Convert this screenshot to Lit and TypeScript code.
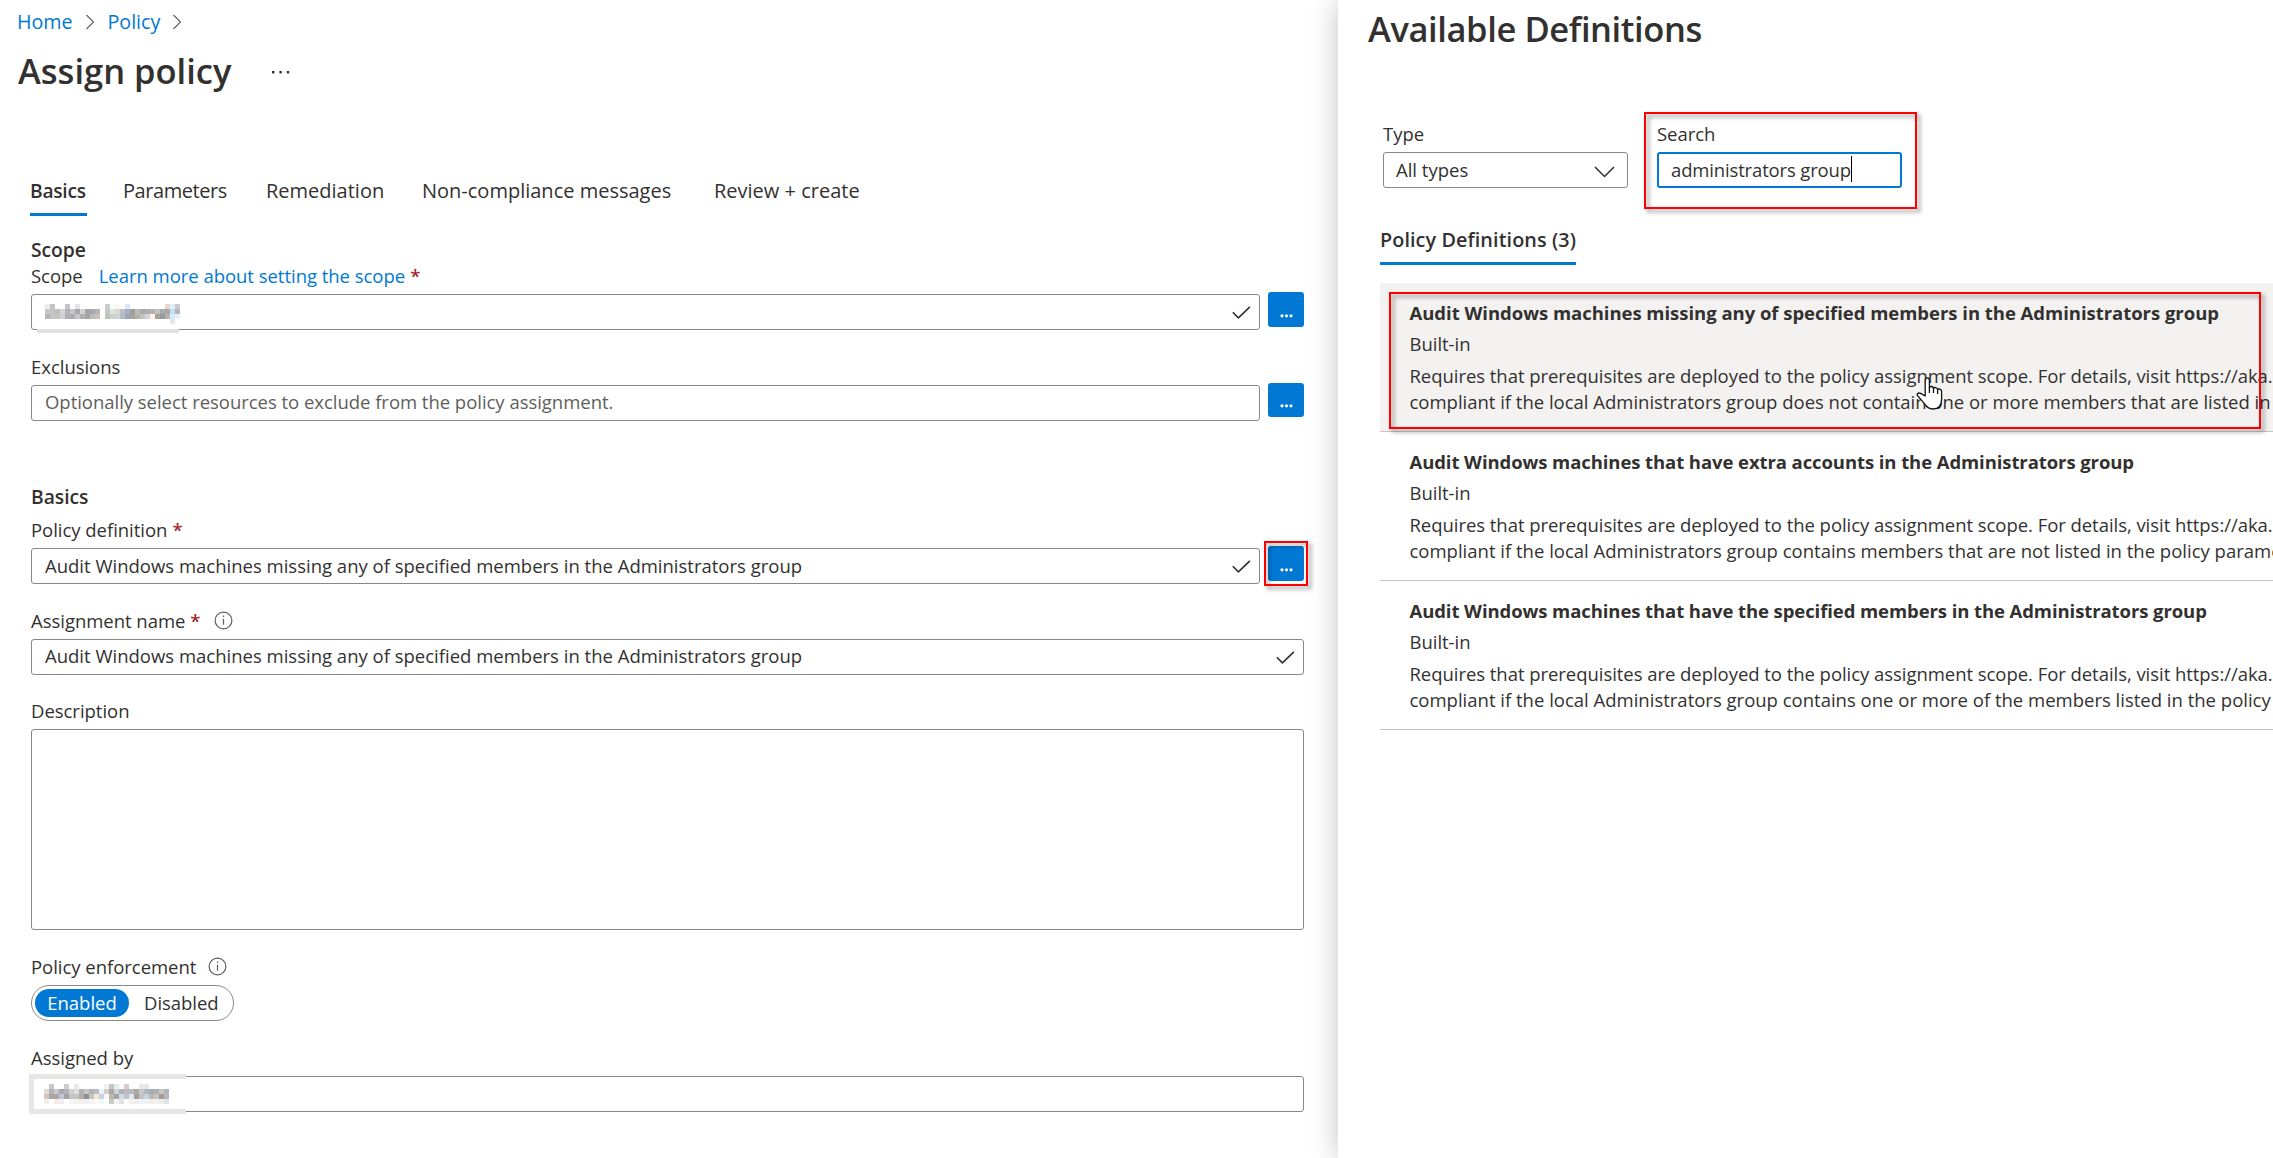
import { LitElement, html, css, svg, nothing } from 'lit';
import { customElement, property } from 'lit/decorators.js';

const SCOPE_MASK = [
  'f3e8e2 c0c5cd - - c4c4c6 - e6e6e6 - - - - - cccccc f8feff fff8ee - dbe6f2 - - - - - - - e8d5cd dcedfb c8c8cc',
  'c9c9c9 c3c3c4 bfbec4 d8d4d0 b4b4b8 c6c6c8 a8a8ac d6d2cc a6a6a8 a9a9ac b5b5b8 - c6c6c4 e2e4e0 dcd8d4 bac0c4 a6b0c4 a09c9c b8bcc0 aca8a4 b0aeae b6b2b2 c6c2ba a6aaae a8a6aa c6ddf2 b2b6ba',
  'b8b6b4 c4c4c4 c8c4bc cfd3d8 b0b0b4 a8acb0 c4c8cc b0b0b0 a2a6a8 b8bcbe cdbcba - bec2ba ccd0cc d4d4d2 b4bac6 9ea6b4 a8a29e b4b0ae c8c2bc d0d4d8 fff4e6 a8a4a0 989a9c bab2ac d4eafa e8f2fc',
  '- - - - - - - - - - - - - - - - - - - - - - - - - e6e6e8 -',
];
const ASSIGNED_MASK = [
  '- cac6c4 - - cccccc - e8e8e6 - - - - - f6f0ea c2c6c4 e4ecf4 - d6ccd2 - - e8e8e6 e6e8e6 - - - -',
  'e2dad4 b4b4b6 c6cace a8a8ac b2b2b8 d0d0cc dce0e4 b2b2b4 c6c8ca b6b2b0 b8bcc4 e8f4fc d4ccc6 a8aaa8 cfd3d8 aab2ba c2b8b8 b6babe a6aaae c6c6c8 b4b8bc a8acb4 b0aeae c4c8c4 b0b4b8',
  'd4c8be a4a8ac b4a49c bcc8d8 a2a2a6 c2c6c2 c8c4c4 b4aca8 8e9092 c2c6c0 fbe6cc c8d2ea fcf8f4 bab6b4 a8a4a4 d0dcea bcc2ca e2e8f0 a89c94 c0c4c2 c6d4e0 bcb8b4 c4c4c2 a49c94 b4b8bc',
  'eeeef0 - f6ece8 eef0f4 - f4f6f6 f4f2f0 f6eee8 f2f0f4 f4f4f4 fdfaf2 f0f8fc - c8cac8 f4f4f2 e2e2e6 - f6f0ee f0f0f2 f0f4f8 f0f2f4 f4ece8 f0f2f4 eef0f0 e0e2e6',
];

const mosaic = (rows: string[], cols: number) => html`
  <svg width=${cols * 5} height=${rows.length * 5} shape-rendering="crispEdges">
    ${rows.map((row, y) => row.split(' ').map((c, x) => c === '-' ? nothing
      : svg`<rect x=${x * 5} y=${y * 5} width="5" height="5" fill=${'#' + c} />`))}
  </svg>`;

const check = html`
  <svg class="check" width="19" height="13" viewBox="0 0 19 13" fill="none" stroke="#323130" stroke-width="1.6">
    <path d="M.8 6.3 6.4 11.8 17.9.8" />
  </svg>`;

const info = html`<svg class="info" width="19" height="19" viewBox="0 0 19 19" fill="none" stroke="#605e5c">
    <circle cx="9.5" cy="9.5" r="8.4" stroke-width="1.2" />
    <path d="M9.5 7.8v6M9.5 4.6v1.5" stroke-width="1.2" />
  </svg>`;

const crumbArrow = html`
  <svg class="crumb" width="10" height="16" viewBox="0 0 10 16" fill="none" stroke="#605e5c" stroke-width="1.1">
    <path d="M1.5 1 8.5 8 1.5 15" />
  </svg>`;

const base = css`
  * { box-sizing: border-box; }
  svg { display: block; flex: none; }
  .label { display: flex; align-items: center; height: 24px; margin-bottom: 7px; white-space: nowrap; }
  .field {
    display: flex; position: relative; flex: 1; height: 36px; padding: 0 8px 0 13px;
    border: 1px solid #8a8886; border-radius: 3px; background: #fff; white-space: nowrap;
  }
  .value { flex: 1; line-height: 33px; letter-spacing: 0; }
`;

@customElement('picker-button')
class PickerButton extends LitElement {
  @property({ type: Boolean }) marked = false;
  @property({ type: Boolean }) short = false;
  static styles = [base, css`
    :host { display: block; position: relative; width: 36px; height: 36px; margin-left: 8px; }
    .btn {
      display: flex; justify-content: center; width: 36px; height: 35px; margin-top: -2px;
      padding-top: 22px; border-radius: 3px; background: #0078d4;
    }
    .btn.short { height: 34px; padding-top: 21px; }
    .mark {
      position: absolute; left: -4px; top: -7px; width: 44px; height: 45px;
      border: 2px solid #f00; filter: drop-shadow(3px 3px 2px rgba(0, 0, 0, .45));
    }
  `];
  render() {
    return html`
      <div class="btn ${this.short ? 'short' : ''}">
        <svg width="13" height="4" fill="#fff">
          <circle cx="2" cy="1.8" r="1.6" /><circle cx="6.5" cy="1.8" r="1.6" /><circle cx="11" cy="1.8" r="1.6" />
        </svg>
      </div>
      ${this.marked ? html`<div class="mark"></div>` : nothing}`;
  }
}

@customElement('assign-form')
class AssignForm extends LitElement {
  static styles = [base, css`
    :host { display: block; width: 1338px; height: 1158px; }
    .crumbs { display: flex; align-items: center; height: 43px; padding-left: 17px; font-size: 19.7px; color: #0078d4; }
    .crumb { margin: 0 13px 0 12px; }
    .head { display: flex; height: 54px; padding-left: 18px; line-height: 56px; font-size: 34.5px; font-weight: 600; letter-spacing: 0; }
    .more { margin: 28px 0 0 41px; }
    .tabs {
      display: grid; grid-template-columns: 93px 143px 156px 292px auto; margin: 72px 0 0 30px;
      font-size: 20px; line-height: 44px; letter-spacing: 0; white-space: nowrap;
    }
    .tab { justify-self: start; height: 47px; }
    .tab.tight { letter-spacing: -.45px; }
    .tab.on { width: 57px; border-bottom: 3px solid #0078d4; font-size: 19.2px; font-weight: 600; letter-spacing: -.25px; }
    .body { width: 1273px; margin: 21px 0 0 31px; }
    .section { height: 26px; line-height: 26px; font-size: 19.3px; font-weight: 600; }
    .basics { margin: 63px 0 7px; }
    .row { display: flex; margin-bottom: 24px; }
    .link { margin-left: 16px; color: #0078d4; }
    .req { width: 14px; margin-left: 5px; color: #a4262c; font-weight: 600; }
    .info { margin-left: 12px; }
    .req + .info { margin-left: 10px; }
    .check { margin-top: 11px; }
    .value.high { line-height: 32px; }
    .hint { color: #605e5c; line-height: 32px; letter-spacing: -.03px; }
    .area { height: 201px; margin: -1px 0 24px; border: 1px solid #8a8886; border-radius: 3px; }
    .desc { position: relative; top: -1px; }
    .masked { padding-top: 9px; }
    .smudge { position: absolute; left: 5px; top: 34px; width: 142px; height: 4px; background: #e1e1e0; }
    .frame { position: absolute; left: -3px; top: -3px; width: 157px; height: 40px; border: 5px solid #e6e6e5; border-right: 0; background: #fff; padding: 5px 0 0 10px; }
    .toggle {
      display: flex; width: 203px; height: 36px; margin-bottom: 24px; padding: 3px; border: 1px solid #8a8886;
      border-radius: 18px; line-height: 27px;
    }
    .on-pill { width: 94px; border-radius: 14px; background: #0078d4; color: #fff; text-align: center; }
    .off { margin-left: 15px; }
  `];
  render() {
    const policy = 'Audit Windows machines missing any of specified members in the Administrators group';
    return html`
      <div class="crumbs"><span>Home</span>${crumbArrow}<span>Policy</span>${crumbArrow}</div>
      <div class="head"><span>Assign policy</span>
        <svg class="more" width="20" height="4" fill="#323130">
          <rect x="0" y="0" width="2.4" height="2.4" /><rect x="7.4" y="0" width="2.4" height="2.4" /><rect x="14.8" y="0" width="2.4" height="2.4" />
        </svg>
      </div>
      <div class="tabs">
        <span class="tab on">Basics</span><span class="tab tight">Parameters</span><span class="tab">Remediation</span>
        <span class="tab">Non-compliance messages</span><span class="tab">Review + create</span>
      </div>
      <div class="body">
        <div class="section">Scope</div>
        <div class="label">Scope<span class="link">Learn more about setting the scope</span><span class="req">*</span></div>
        <div class="row">
          <div class="field"><div class="value masked">${mosaic(SCOPE_MASK, 27)}</div>${check}<div class="smudge"></div></div>
          <picker-button></picker-button>
        </div>
        <div class="label">Exclusions</div>
        <div class="row">
          <div class="field"><div class="value hint">Optionally select resources to exclude from the policy assignment.</div></div>
          <picker-button short></picker-button>
        </div>
        <div class="section basics">Basics</div>
        <div class="label">Policy definition<span class="req">*</span></div>
        <div class="row">
          <div class="field"><div class="value">${policy}</div>${check}</div>
          <picker-button marked></picker-button>
        </div>
        <div class="label">Assignment name<span class="req">*</span>${info}</div>
        <div class="row"><div class="field"><div class="value high">${policy}</div>${check}</div></div>
        <div class="label desc">Description</div>
        <div class="area"></div>
        <div class="label">Policy enforcement${info}</div>
        <div class="toggle"><span class="on-pill">Enabled</span><span class="off">Disabled</span></div>
        <div class="label">Assigned by</div>
        <div class="row"><div class="field"><div class="frame">${mosaic(ASSIGNED_MASK, 25)}</div></div></div>
      </div>`;
  }
}

const DEFINITIONS = [
  { title: 'Audit Windows machines missing any of specified members in the Administrators group',
    text: 'compliant if the local Administrators group does not contain one or more members that are listed in' },
  { title: 'Audit Windows machines that have extra accounts in the Administrators group',
    text: 'compliant if the local Administrators group contains members that are not listed in the policy parame' },
  { title: 'Audit Windows machines that have the specified members in the Administrators group',
    text: 'compliant if the local Administrators group contains one or more of the members listed in the policy' },
];

@customElement('definitions-panel')
class DefinitionsPanel extends LitElement {
  static styles = [base, css`
    :host {
      display: block; position: relative; width: 935px; height: 1158px; background: #fff;
      box-shadow: 0 0 27px rgba(0, 0, 0, .24);
    }
    .title { height: 58px; padding-left: 30px; line-height: 58px; font-size: 34.5px; font-weight: 600; letter-spacing: -.4px; }
    .filters { display: flex; gap: 29px; margin: 63px 0 0 45px; }
    .filter { position: relative; width: 245px; }
    .filter .field { flex: none; width: 245px; padding-left: 12px; }
    .drop { margin: 13px 4px 0 0; }
    .filter .focus { border: 2px solid #0078d4; }
    .focus span { line-height: 31px; letter-spacing: -.15px; }
    .caret { width: 1px; height: 26px; margin-top: 2px; background: #000; }
    .mark { position: absolute; border: 2px solid #f00; filter: drop-shadow(3px 3px 2px rgba(0, 0, 0, .45)); }
    .mark.search { left: -13px; top: -9px; width: 273px; height: 97px; }
    .mark.item { left: 9px; top: 9px; width: 872px; height: 137px; }
    .tab {
      width: 196px; height: 47px; margin: 30px 0 18px 42px; border-bottom: 3px solid #0078d4;
      line-height: 44px; font-size: 19.8px; font-weight: 600; letter-spacing: .09px; white-space: nowrap;
    }
    .def { position: relative; height: 149px; margin-left: 42px; padding: 17px 0 0 29.5px; border-bottom: 1px solid #c8c6c4; white-space: nowrap; }
    .def.hover { background: #f3f2f1; }
    .name { height: 26px; line-height: 26px; font-weight: 700; letter-spacing: -.085px; }
    .hover .name { letter-spacing: -.03px; }
    .kind { height: 26px; margin-top: 5px; line-height: 26px; }
    .text { height: 26px; line-height: 26px; letter-spacing: 0; }
    .hover .text { letter-spacing: -.012px; }
    .def .text.first { margin-top: 6px; letter-spacing: -.045px; }
    .hand { position: absolute; left: 536px; top: 94px; }
  `];
  render() {
    return html`
      <div class="title">Available Definitions</div>
      <div class="filters">
        <div class="filter">
          <div class="label">Type</div>
          <div class="field"><div class="value">All types</div>
            <svg class="drop" width="21" height="12" viewBox="0 0 21 12" fill="none" stroke="#323130" stroke-width="1.5"><path d="M1 1 10.5 10.5 20 1" /></svg>
          </div>
        </div>
        <div class="filter">
          <div class="label">Search</div>
          <div class="field focus"><span>administrators group</span><div class="caret"></div></div>
          <div class="mark search"></div>
        </div>
      </div>
      <div class="tab">Policy Definitions (3)</div>
      ${DEFINITIONS.map((d, i) => html`
        <div class="def ${i === 0 ? 'hover' : ''}">
          <div class="name">${d.title}</div>
          <div class="kind">Built-in</div>
          <div class="text first">Requires that prerequisites are deployed to the policy assignment scope. For details, visit https://aka.</div>
          <div class="text">${d.text}</div>
          ${i === 0 ? html`
            <div class="mark item"></div>
            <svg class="hand" width="27" height="34" viewBox="0 0 27 34" fill="#fff" stroke="#111" stroke-width="1.3" stroke-linejoin="round">
              <path d="M9.2 19V3.2C9.2.2 13.4.2 13.4 3.2V11C14 8.8 17.4 9 17.5 11.6 18.2 9.8 21.5 10.2 21.6 12.8 22.4 11.4 25.6 11.8 25.6 14.6V22C25.6 28 22.6 32 17 32 12.4 32 10.4 30 8.4 26.6L1.6 18.6C.4 16.6 2.6 15.4 4.6 16.4Z" />
              <path d="M13.4 10.5V16M17.5 11.5V16M21.6 12.8V17" fill="none" />
            </svg>` : nothing}
        </div>`)}`;
  }
}

@customElement('app-root')
class AppRoot extends LitElement {
  static styles = css`
    :host {
      display: flex; width: 2273px; height: 1158px; overflow: hidden; background: #fff; color: #323130;
      font-family: 'Open Sans', 'Noto Sans', sans-serif; font-size: 18.5px; letter-spacing: -.03px;
    }
  `;
  render() {
    return html`<assign-form></assign-form><definitions-panel></definitions-panel>`;
  }
}
